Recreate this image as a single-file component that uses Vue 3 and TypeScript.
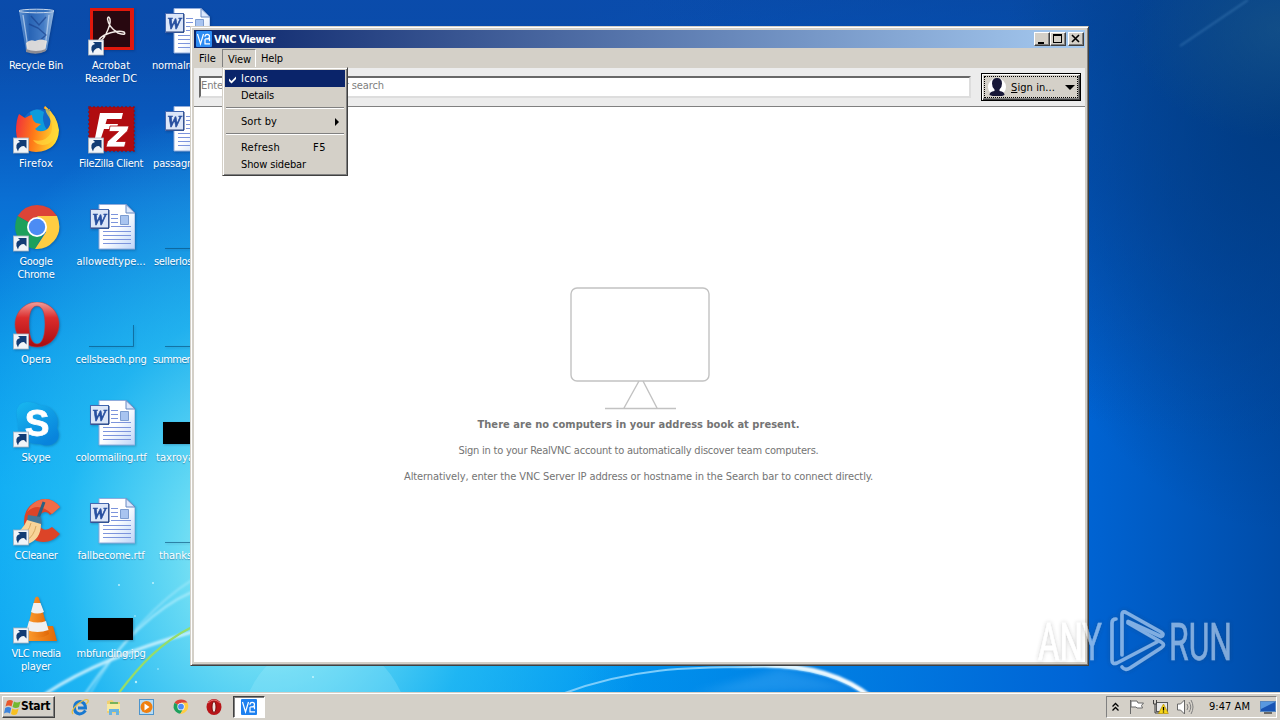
<script setup lang="ts">
type IconKind =
  | 'bin' | 'firefox' | 'chrome' | 'opera' | 'skype' | 'ccleaner' | 'vlc'
  | 'acrobat' | 'filezilla' | 'word' | 'thumb' | 'edge' | 'line'

interface Line { text: string; w: number }
interface DesktopItem { kind: IconKind; lines: Line[]; link?: boolean; indent?: number }

const items: DesktopItem[] = [
  { kind: 'bin', lines: [{ text: 'Recycle Bin', w: 54 }] },
  { kind: 'firefox', link: true, lines: [{ text: 'Firefox', w: 34 }] },
  { kind: 'chrome', link: true, lines: [{ text: 'Google', w: 33 }, { text: 'Chrome', w: 37 }] },
  { kind: 'opera', link: true, lines: [{ text: 'Opera', w: 30 }] },
  { kind: 'skype', link: true, lines: [{ text: 'Skype', w: 29 }] },
  { kind: 'ccleaner', link: true, lines: [{ text: 'CCleaner', w: 43 }] },
  { kind: 'vlc', link: true, lines: [{ text: 'VLC media', w: 49 }, { text: 'player', w: 30 }] },
  { kind: 'acrobat', link: true, lines: [{ text: 'Acrobat', w: 38 }, { text: 'Reader DC', w: 52 }] },
  { kind: 'filezilla', link: true, lines: [{ text: 'FileZilla Client', w: 64 }] },
  { kind: 'word', lines: [{ text: 'allowedtype...', w: 69 }] },
  { kind: 'edge', lines: [{ text: 'cellsbeach.png', w: 71 }] },
  { kind: 'word', lines: [{ text: 'colormailing.rtf', w: 71 }] },
  { kind: 'word', lines: [{ text: 'fallbecome.rtf', w: 67 }] },
  { kind: 'thumb', lines: [{ text: 'mbfunding.jpg', w: 69 }] },
  { kind: 'word', indent: 3, lines: [{ text: 'normalre', w: 43 }] },
  { kind: 'word', indent: 4, lines: [{ text: 'passagr', w: 38 }] },
  { kind: 'line', indent: 5, lines: [{ text: 'sellerlos', w: 38 }] },
  { kind: 'line', indent: 4, lines: [{ text: 'summer', w: 37 }] },
  { kind: 'thumb', indent: 7, lines: [{ text: 'taxroya', w: 38 }] },
  { kind: 'line', indent: 10, lines: [{ text: 'thanks', w: 33 }] },
]

// Spreads or tightens the letters so that a label takes a set width in pixels.
const vFit = {
  mounted(el: HTMLElement, binding: { value: number }) {
    const range = document.createRange()
    range.selectNodeContents(el)
    const natural = range.getBoundingClientRect().width
    const count = (el.textContent ?? '').length
    if (count > 0) el.style.letterSpacing = `${((binding.value - natural) / count).toFixed(3)}px`
  },
}
</script>

<template>
  <div class="desktop">
    <svg class="wallpaper" width="1280" height="720" viewBox="0 0 1280 720">
      <defs>
        <filter id="soft"><feGaussianBlur stdDeviation="1.2" /></filter>
        <filter id="soft3"><feGaussianBlur stdDeviation="4" /></filter>
        <linearGradient id="arc" x1="730" x2="880" y1="0" y2="0" gradientUnits="userSpaceOnUse">
          <stop offset="0" stop-color="#b8e6ff" stop-opacity="0" /><stop offset=".3" stop-color="#e8f8ff" /><stop offset="1" stop-color="#fff" />
        </linearGradient>
      </defs>
      <g fill="none" filter="url(#soft)">
        <path d="M45 694C85 668 130 650 192 632" stroke="#d8f6ff" stroke-width="3" opacity=".85" />
        <path d="M85 694C115 650 150 610 192 592" stroke="#c8f4ff" stroke-width="2" opacity=".65" />
        <path d="M90 694C120 640 160 600 192 580" stroke="#c8f4ff" stroke-width="1.5" opacity=".5" />
      </g>
      <path d="M118 694C140 665 160 643 192 627" fill="none" stroke="#96dc6a" stroke-width="2.2" />
      <ellipse cx="325" cy="735" rx="85" ry="95" fill="#b0f0ff" opacity=".22" />
      <path d="M690 694Q740 682 780 668L860 690Z" fill="#7cc8ff" opacity=".22" filter="url(#soft3)" />
      <path d="M562 694C630 668 690 667 752 667C800 664 850 678 872 700" fill="none" stroke="#7ccdfb" stroke-width="2" />
      <path d="M730 667C790 661 838 670 872 698" fill="none" stroke="url(#arc)" stroke-width="4.500" filter="url(#soft)" />
      <path d="M1180 46L1248 0" stroke="#5c9ad0" stroke-width="2" opacity=".35" filter="url(#soft)" />
      <g fill="#d8faff" opacity=".8"><circle cx="119" cy="585" r="1" /><circle cx="153" cy="583" r="1" /><circle cx="136" cy="682" r="1.2" /><circle cx="158" cy="669" r=".8" /><circle cx="313" cy="677" r="1" /><circle cx="135" cy="616" r=".8" /></g>
    </svg>

    <div class="icons">
      <div v-for="(it, i) in items" :key="i" class="item">
        <svg class="pic" width="48" height="50" viewBox="0 0 48 50">
          <template v-if="it.kind === 'bin'">
            <defs><linearGradient id="bn" x2="1"><stop stop-color="#6b9cd8" /><stop offset=".3" stop-color="#2c68b8" /><stop offset=".7" stop-color="#4c84cc" /><stop offset="1" stop-color="#a8c8e8" /></linearGradient></defs>
            <path d="M7 3L14 43Q24 48 35 42L42 3Z" fill="url(#bn)" opacity=".9" />
            <path d="M11 7l5 33M37 7l-4 33" stroke="#c8dcf4" stroke-width="1.3" opacity=".7" />
            <path d="M19 8l8 9 7-8M17 16l9 4 8 7-9 8" stroke="#153c88" fill="none" stroke-width="1.4" opacity=".6" />
            <path d="M14 35q4-4 9-2 6-3 12 0l-2 10q-10 4-18 0z" fill="#ece4dc" opacity=".9" />
            <path d="M14 41q10 4 20 0v2q-9 5-20 1z" fill="#8c8c94" />
            <ellipse cx="24.500" cy="3" rx="17.500" ry="1.800" fill="#3470bc" stroke="#c8d8ec" stroke-width="1" />
          </template>
          <template v-else-if="it.kind === 'firefox'">
            <defs><linearGradient id="ff" x1="0" y1=".3" x2="1" y2=".5"><stop stop-color="#f0303c" /><stop offset=".45" stop-color="#ff7a18" /><stop offset="1" stop-color="#ffe030" /></linearGradient></defs>
            <circle cx="27" cy="20" r="17" fill="#1268c8" />
            <path d="M18 6q7-5 14 0-3 9 3 18l-13 4z" fill="#0c9cdc" />
            <path d="M7 8l6 4q5-3 7-3 0 5 4 8l5 1-6 5q4 4 11 1 6-4 4-13-1-6 0-8Q29 4 33 0q12 9 14 24-1 21-23 22Q5 45 4 25q0-11 3-17z" fill="url(#ff)" />
            <path d="M33 0q0 6 4 11 5 8 2 16-6 10-18 7 5 7 15 4 10-5 10-16Q45 10 33 0z" fill="#ffd83c" opacity=".7" />
          </template>
          <template v-else-if="it.kind === 'chrome'">
            <path d="M25 23L5.500 12Q13 1 25 1q13 0 20 11H25z" fill="#dc4437" />
            <path d="M25 23L5.500 12Q-1 27 10 39q6 5 13 6l9-16z" fill="#1da05c" />
            <path d="M25 12h20q6 14-3 25-8 9-19 8l11-17z" fill="#ffcd42" />
            <circle cx="25" cy="23" r="10" fill="#fff" /><circle cx="25" cy="23" r="8.200" fill="#4c8cf4" />
          </template>
          <template v-else-if="it.kind === 'opera'">
            <defs><linearGradient id="op" x2="0" y2="1"><stop stop-color="#f0a09c" /><stop offset=".35" stop-color="#dc2c2c" /><stop offset="1" stop-color="#a80c10" /></linearGradient></defs>
            <path fill-rule="evenodd" d="M25 0a22 22.500 0 1 0 .1 0zM25 4c6 0 8 8 8 18s-2 20-8 20-8-10-8-20 2-18 8-18z" fill="url(#op)" stroke="#c43838" stroke-width=".5" />
          </template>
          <template v-else-if="it.kind === 'skype'">
            <defs><linearGradient id="sk" x2=".6" y2="1"><stop stop-color="#18b8f0" /><stop offset="1" stop-color="#0884dc" /></linearGradient></defs>
            <path d="M15 2q7 0 12 3 12 0 17 10 3 5 1 13 4 8-1 14-7 6-16 2-12 1-19-9-4-6-3-13Q1 3 15 2z" fill="url(#sk)" />
            <text x="25" y="36" text-anchor="middle" font-family="Liberation Sans, sans-serif" font-weight="700" font-size="37" fill="#fff" stroke="#fff" stroke-width=".8">S</text>
          </template>
          <template v-else-if="it.kind === 'ccleaner'">
            <path d="M48 9Q38-3 25 3 12 9 12 24 13 39 25 43q13 4 23-7l-8-7q-8 6-12-1-4-8 2-13 5-3 8 2z" fill="#dc4428" />
            <path d="M48 9Q38-3 25 3q-7 4-10 11Q26 3 40 16z" fill="#f06c48" />
            <path d="M32 4L25 23" stroke="#2c6080" stroke-width="3" />
            <path d="M16 17l13 2 1 8-15-4z" fill="#447898" />
            <path d="M15 22l14 4Q29 41 16 46 4 47 1 37 11 32 15 22z" fill="#f8d498" /><path d="M8 40q9-6 11-15m-5 18q8-5 10-15" stroke="#d8a860" fill="none" />
          </template>
          <template v-else-if="it.kind === 'vlc'">
            <defs><linearGradient id="vl" x2="1"><stop stop-color="#ffa030" /><stop offset="1" stop-color="#e06808" /></linearGradient></defs>
            <path d="M14 34l6-4h21l4 15H12z" fill="url(#vl)" />
            <path d="M23 2q2-3 4 0l10 36q-10 7-23 0z" fill="url(#vl)" />
            <path d="M21.500 7h7l3.500 9q-7 3-13 0zM17 25q9 3 17 0l2.500 9q-11 4-22 0z" fill="#f0f0f0" />
          </template>
          <template v-else-if="it.kind === 'acrobat'">
            <path d="M3 0h44v42H3z" fill="#e0180c" /><path d="M6 3h37v36H6z" fill="#280810" />
            <path d="M12 32q3 2 7-6 5-10 4-15-2-4-2.500 0 1 8 10.500 14 9 3 6-1-6-2-17 2-7 3-8 6z" fill="none" stroke="#f4ece8" stroke-width="1.500" />
          </template>
          <template v-else-if="it.kind === 'filezilla'">
            <rect x="2" y="1" width="45" height="44" fill="#b00c10" /><rect x="2" y="1" width="45" height="44" fill="none" stroke="#8c1020" stroke-width="1.500" stroke-dasharray="2 2" />
            <path d="M13 7h23l-1.500 6H20l-1.500 5H31l-1.500 5H17l-3 9H8z" fill="#fff" />
            <path d="M23 20h19l-1.500 5-11 10.500H39L37.500 41H19l1.500-5.500L31.500 25.500H22z" fill="#fff" stroke="#b00c10" stroke-width=".8" />
          </template>
          <template v-else-if="it.kind === 'word'">
            <defs><linearGradient id="pg" x2="1" y2="1"><stop offset=".5" stop-color="#fff" /><stop offset="1" stop-color="#bcd4f8" /></linearGradient></defs>
            <path d="M12 .5h27l9 8.500v36H12z" fill="url(#pg)" stroke="#90acdc" />
            <path d="M39 .5v8.500h9z" fill="#dce8fc" stroke="#6888c0" />
            <path d="M24 10.500h7M24 14.500h7M24 18.500h7M24 22.500h20M16 27.500h28M16 31.500h28M16 35.500h28M16 39.500h28" stroke="#7c94dc" />
            <path d="M33.500 11.500h8v9h-8z" fill="#a8c4f0" stroke="#7c9cd0" />
            <rect x="3.500" y="5.500" width="18" height="19" fill="#dce6f8" stroke="#4468b0" /><path d="M4 24h18V6" stroke="#24407c" fill="none" />
            <text x="12" y="21" text-anchor="middle" font-family="Liberation Serif, serif" font-style="italic" font-weight="700" font-size="16" fill="#2850a0" stroke="#2850a0" stroke-width=".6">W</text>
          </template>
          <path v-else-if="it.kind === 'thumb'" d="M1 22h45v22H1z" fill="#000" />
          <path v-else-if="it.kind === 'edge'" d="M2 44.500h44.500V23" fill="none" stroke="#084c78" stroke-opacity=".6" />
          <path v-else d="M3 44.500h44" stroke="#084c78" stroke-opacity=".6" />
          <g v-if="it.link">
            <rect x="1.500" y="32" width="15" height="15" fill="#f0f4f8" stroke="#a8b4c0" stroke-width=".8" />
            <path d="M6 45.500Q1.500 38 8 36L6 34h8.500v8.500L12 40Q7 40 6 45.500z" fill="#123c74" />
          </g>
        </svg>
        <div class="caption" :class="{ cut: it.indent !== undefined }" :style="{ paddingLeft: (it.indent ?? 0) + 'px' }">
          <div v-for="l in it.lines" :key="l.text"><span v-fit="l.w">{{ l.text }}</span></div>
        </div>
      </div>
    </div>

    <section class="window">
      <header class="titlebar">
        <svg width="16" height="16" viewBox="0 0 16 16"><rect width="16" height="16" rx="1" fill="#2c8cf4" /><path d="M1.500 3l3 10 3-10M9 5.800Q9 3.300 11.200 3.300q2.300 0 2.300 2.200 0 2.200-2.300 2.400M9.200 7.900h4.300v2.300M9 8v4.800h5" fill="none" stroke="#fff" stroke-width="1.200" /></svg>
        <b v-fit="61">VNC Viewer</b>
        <div class="controls">
          <button><svg width="14" height="12"><path d="M3 9h6v2H3z" /></svg></button>
          <button><svg width="14" height="12"><path fill-rule="evenodd" d="M2 1h9v9H2zM3 3h7v6H3z" /></svg></button>
          <button class="close"><svg width="14" height="12"><path d="M3 2l7 7M10 2L3 9" stroke="#000" stroke-width="1.600" /></svg></button>
        </div>
      </header>
      <nav class="menubar">
        <span class="mi"><span v-fit="17">File</span></span>
        <span class="mi open"><span v-fit="23">View</span></span>
        <span class="mi"><span v-fit="22">Help</span></span>
      </nav>
      <div class="toolbar">
        <div class="search"><span v-fit="183">Enter a VNC Server address or search</span></div>
        <button class="signin">
          <svg width="18" height="18" viewBox="0 0 18 18"><circle cx="9" cy="9" r="9" fill="#fff" /><path d="M9 0q5 0 5 5.500 0 4-2.500 6v1.500q5 .5 5 4-4 2-7.500 1.500-4 0-7.500-1.500 0-3.500 5-4v-1.500Q4 9.500 4 5.500 4 0 9 0z" fill="#181838" /></svg>
          <span v-fit="44" class="si"><u>S</u>ign in...</span>
          <svg width="10" height="5"><path d="M0 0h10L5 5z" /></svg>
        </button>
      </div>
      <main class="content">
        <svg width="140" height="124" viewBox="0 0 140 124" fill="none" stroke="#c2c2c2" stroke-width="1.400"><rect x="1" y="1" width="138" height="93" rx="6" /><path d="M69 94L54 121M73 94L87 121M35 121.500H106" /></svg>
        <b v-fit="322">There are no computers in your address book at present.</b>
        <p><span v-fit="360">Sign in to your RealVNC account to automatically discover team computers.</span></p>
        <p><span v-fit="469">Alternatively, enter the VNC Server IP address or hostname in the Search bar to connect directly.</span></p>
      </main>
    </section>

    <div class="popup">
      <div class="row on"><svg class="tick" width="9" height="9"><path d="M1 3.500L3.500 6 8 1.500V4L3.500 8.500 1 6z" fill="#fff" /></svg><span v-fit="27">Icons</span></div>
      <div class="row"><span v-fit="33">Details</span></div>
      <hr />
      <div class="row"><span v-fit="36">Sort by</span><svg class="sub" width="4" height="8"><path d="M0 0v8l4-4z" /></svg></div>
      <hr />
      <div class="row"><span class="name"><span v-fit="39">Refresh</span></span><span v-fit="13">F5</span></div>
      <div class="row"><span v-fit="65">Show sidebar</span></div>
    </div>

    <svg class="watermark" width="210" height="70" viewBox="1031 606 210 70">
      <defs><filter id="sh" x="-10%" y="-10%" width="120%" height="120%"><feDropShadow dx="0" dy="0" stdDeviation="2" flood-color="#303030" flood-opacity=".5" /></filter></defs>
      <g filter="url(#sh)" opacity=".5">
        <g fill="#fff" stroke="#fff" stroke-width=".5" font-family="Roboto, sans-serif" font-size="52">
          <text x="1038" y="660" textLength="64" lengthAdjust="spacingAndGlyphs">ANY</text>
          <text x="1169" y="660" textLength="63" lengthAdjust="spacingAndGlyphs">RUN</text>
        </g>
        <g fill="none" stroke="#fff" stroke-width="3.600" stroke-linecap="round" stroke-linejoin="round">
          <path d="M1116 619q-4 0-4 4v37q0 5 5 3l40-21" />
          <path d="M1122 655v-40q0-5 5-2l34 19q4 3 0 4.500l-33-15" />
          <path d="M1122 667q3 4 8 1l31-20q5-3 0-6l-33-19" />
        </g>
      </g>
    </svg>

    <footer class="taskbar">
      <button class="start">
        <svg width="17" height="16" viewBox="0 0 17 16"><path d="M3 2q3-2 6 0L7.500 7.500q-3-2-6 0z" fill="#e8582c" /><path d="M10 2.500q3 2 6.500 0L15 8q-3 2-6.500 0z" fill="#74b830" /><path d="M1.200 9q3-2 6 0L6 14.500q-3-2-6 0z" fill="#3c84dc" /><path d="M8.200 9.500q3 2 6.500 0L13 15q-3 2-6 0z" fill="#f8c020" /></svg>
        <b v-fit="29">Start</b>
      </button>
      <div class="quick">
        <svg width="18" height="18" viewBox="0 0 18 18"><path d="M14.500 12.500Q12 16 8.500 16 3 15 3.500 9 4 4 9 3.500q5.500 1 5.500 6.500H7" fill="none" stroke="#1878d0" stroke-width="3" /><path d="M2 16Q-1 13 7 6q8-6 10-4 1 2-2 4" fill="none" stroke="#e8c040" stroke-width="1.300" /></svg>
        <svg width="18" height="18" viewBox="0 0 18 18"><path d="M2 3l5-1 2 2h6v11H2z" fill="#f0d070" /><path d="M2 6h13v7H2z" fill="#f8eaa0" /><path d="M4 17v-6h10v6h-3v-3H7v3z" fill="#68b4e0" /><path d="M5 5h8" stroke="#50a850" stroke-width="1.500" /></svg>
        <svg width="18" height="18" viewBox="0 0 18 18"><rect x="1.500" y="1.500" width="14" height="15" fill="#b8dcf4" stroke="#4c94cc" /><circle cx="8.500" cy="9" r="6" fill="#f08010" /><path d="M6.500 5.500v7l5-3.500z" fill="#fff" /></svg>
        <svg width="18" height="18" viewBox="0 0 50 48"><path d="M25 23L7 12Q13 3 25 3q13 0 18 9H25z" fill="#dc4437" /><path d="M25 23L7 12Q0 26 11 37q6 5 12 6l9-14z" fill="#1da05c" /><path d="M25 12h18q6 14-3 23-8 9-17 8l11-17z" fill="#ffcd42" /><circle cx="25" cy="23" r="10" fill="#fff" /><circle cx="25" cy="23" r="8" fill="#4c8cf4" /></svg>
        <svg width="18" height="18" viewBox="0 0 18 18"><ellipse cx="9" cy="9" rx="7.500" ry="8" fill="#b81418" /><path d="M3 5q6-6 12 0" stroke="#e87070" fill="none" /><ellipse cx="9" cy="9" rx="2" ry="5.500" fill="#f0e4e0" stroke="#780808" /></svg>
      </div>
      <div class="task"><svg width="16" height="16" viewBox="0 0 16 16"><rect width="16" height="16" rx="1" fill="#1c80f0" /><path d="M1.500 3l3 10 3-10M9 5.800Q9 3.300 11.200 3.300q2.300 0 2.300 2.200 0 2.200-2.300 2.400M9.200 7.900h4.300v2.300M9 8v4.800h5" fill="none" stroke="#fff" stroke-width="1.200" /></svg></div>
      <div class="tray">
        <svg width="9" height="10" fill="none" stroke="#000" stroke-width="1.300"><path d="M1.500 4.500l3-3 3 3M1.500 8.500l3-3 3 3" /></svg>
        <svg class="flag" width="17" height="16" viewBox="0 0 17 16"><path d="M2.500 1v14M3 2h6l1 2h5.500l-2 2.500 1 2.500H9L8 8H3z" fill="#fff" stroke="#686868" /></svg>
        <svg class="net" width="17" height="16" viewBox="0 0 17 16"><rect x="4.500" y="3.500" width="11" height="9" fill="#e8e8e8" stroke="#585858" /><path d="M1.500 1v4h3V1M3 5v9h5" fill="none" stroke="#404040" /><path d="M11.500 5l4.800 9.500H6.500z" fill="#f8d818" stroke="#b89000" stroke-width=".7" /><path d="M11.500 8v3.500m0 1v1" stroke="#000" stroke-width="1.300" /></svg>
        <svg class="vol" width="18" height="16" viewBox="0 0 18 16"><path d="M1.500 5h3l4-4v14l-4-4h-3z" fill="#fff" stroke="#686868" /><path d="M11 5q2 3 0 6M13 3q3.500 5 0 10M15 1q4 7 0 14" fill="none" stroke="#808080" /></svg>
        <span class="clock"><span v-fit="41">9:47 AM</span></span>
        <svg width="16" height="14" viewBox="0 0 16 14"><rect x=".5" y="1.500" width="15" height="10" fill="#1854b4" stroke="#5888c0" /><path d="M1 2h14L1 9z" fill="#5898e0" /><path d="M4 13h8" stroke="#484848" stroke-width="1.500" /></svg>
      </div>
    </footer>
  </div>
</template>

<style>
html, body { margin: 0; overflow: hidden; }
</style>

<style scoped>
.desktop {
  position: relative; width: 1280px; height: 720px; overflow: hidden;
  display: flex; flex-direction: column; justify-content: space-between;
  font: 11px/13px "DejaVu Sans Condensed", "DejaVu Sans", sans-serif; color: #000;
  background:
    radial-gradient(ellipse 150px 110px at 1280px 30px, rgba(28, 88, 136, .6), rgba(28, 88, 136, 0)),
    radial-gradient(ellipse 280px 420px at 1280px 110px, rgba(0, 58, 128, .95), rgba(0, 60, 130, 0)),
    radial-gradient(ellipse 640px 440px at 1280px 0, rgba(6, 72, 156, .95), rgba(6, 72, 162, .6) 50%, rgba(6, 80, 180, 0)),
    linear-gradient(rgba(10, 76, 172, .9), rgba(10, 76, 168, 0) 12%),
    linear-gradient(to right, rgba(0, 96, 210, 0) 45%, rgba(0, 98, 212, .95) 84%, #004ca8 100%),
    radial-gradient(ellipse 380px 460px at 270px 560px, rgba(176, 246, 242, 1), rgba(120, 228, 244, .85) 25%, rgba(50, 200, 244, .62) 55%, rgba(0, 160, 240, 0)),
    linear-gradient(#0a48a4 0, #0958bc 16%, #0a70d4 28%, #0490e8 50%, #00a0f4 68%, #0096f0 100%);
}
.wallpaper { position: absolute; left: 0; top: 0; }
.icons {
  position: relative; display: grid; grid-auto-flow: column;
  grid-template-rows: repeat(7, 98px); grid-template-columns: 74px 74px 74px; column-gap: 1px;
  margin: 0 0 0 -1px; height: 686px;
}
.item { display: flex; flex-direction: column; align-items: center; padding-top: 8px; min-width: 0; }
.pic { display: block; flex: none; filter: drop-shadow(1px 1px 1px rgba(0, 20, 60, .25)); }
.caption { color: #fff; text-align: center; white-space: nowrap; text-shadow: 0 1px 1px rgba(0, 40, 90, .4); margin-top: 1px; }
.caption.cut { align-self: flex-start; }
button { font: inherit; margin: 0; }
svg { display: block; flex: none; }

.window {
  position: absolute; left: 190px; top: 26px; width: 899px; height: 640px; box-sizing: border-box;
  display: flex; flex-direction: column; background: #d4d0c8; padding: 2px;
  border: 1px solid; border-color: #d4d0c8 #404040 #404040 #d4d0c8;
  box-shadow: inset 1px 1px #fff, inset -1px -1px #808080;
}
.titlebar {
  display: flex; align-items: center; height: 18px; margin: 1px 1px 0; padding: 0 1px 0 2px;
  color: #fff; background: linear-gradient(to right, #0a246a, #a6caf0);
}
.titlebar b { margin-left: 2px; }
.controls { display: flex; margin-left: auto; }
.controls button {
  width: 16px; height: 14px; padding: 0; overflow: hidden; background: #d4d0c8;
  border: 1px solid; border-color: #fff #404040 #404040 #fff; box-shadow: inset -1px -1px #808080;
}
.controls .close { margin-left: 2px; }
.menubar { display: flex; height: 20px; margin: 0 1px; }
.mi { display: flex; align-items: center; height: 17px; padding: 0 5px 0 4px; margin-top: 1px; border: 1px solid transparent; }
.mi.open { border-color: #808080 #fff #fff #808080; padding: 1px 4px 0 5px; height: 16px; }
.toolbar {
  display: flex; align-items: center; height: 38px; margin: 0 1px; padding: 0 4px 0 5px;
  background: #ececec; border-bottom: 1px solid #808080;
}
.search {
  flex: 1; height: 18px; padding: 0; margin: 0 10px 1px 0; white-space: nowrap; line-height: 16px; color: #808080; background: #fff;
  border: 2px solid; border-color: #686868 #ddd #ddd #686868;
}
.signin {
  display: flex; align-items: center; width: 100px; height: 28px; padding: 0 5px 0 6px; background: #d4d0c8;
  border: 1px solid #000; box-shadow: inset 1px 1px #fff, inset -1px -1px #404040, inset -2px -2px #808080;
  outline: 1px dotted #000; outline-offset: -4px;
}
.si { margin: 0 auto 0 5px; white-space: nowrap; }
.content {
  flex: 1; margin: 0 1px 1px; padding-top: 180px; background: #fff; color: #747474;
  display: flex; flex-direction: column; align-items: center; white-space: nowrap;
}
.content b { margin: 7px 2px 0 0; }
.content p { margin: 13px 2px 0 0; }

.popup {
  position: absolute; left: 222px; top: 67px; width: 126px; height: 109px; box-sizing: border-box; padding: 2px 1px;
  background: #d4d0c8; border: 1px solid; border-color: #d4d0c8 #404040 #404040 #d4d0c8;
  box-shadow: inset 1px 1px #fff, inset -1px -1px #808080;
}
.row { position: relative; display: flex; align-items: center; height: 17px; padding-left: 17px; margin: 0 1px 0 0; white-space: nowrap; }
.row.on { background: #0a246a; color: #fff; margin-left: 1px; padding-left: 16px; }
.tick { position: absolute; left: 3px; top: 5px; }
.sub { margin: 0 6px 0 auto; }
.name { width: 72px; }
hr { height: 1px; margin: 3px 2px 4px; border: 0; border-top: 1px solid #808080; background: #fff; }
.watermark { position: absolute; left: 1031px; top: 606px; }

.taskbar {
  position: relative; display: flex; align-items: center; height: 25px; padding: 0 2px 1px;
  background: #d4d0c8; border-top: 1px solid #fff; box-shadow: 0 -1px #d4d0c8;
}
.start {
  display: flex; align-items: center; width: 53px; height: 22px; padding: 0 1px; background: #d4d0c8;
  border: 1px solid; border-color: #fff #404040 #404040 #fff; box-shadow: inset -1px -1px #808080;
}
.start b { font-size: 12px; }
.quick { display: flex; gap: 15.5px; margin-left: 16px; }
.task {
  display: flex; align-items: center; justify-content: center; width: 30px; height: 20px; margin-left: 10px; background: #fff;
  border: 1px solid; border-color: #404040 #fff #fff #404040; box-shadow: inset 1px 1px #808080;
}
.tray {
  display: flex; align-items: center; margin-left: auto; width: 165px; height: 20px; padding: 0 0 0 4px; margin-right: 1px;
  border: 1px solid; border-color: #808080 #fff #fff #808080;
}
.flag { margin-left: 8px; }
.net { margin-left: 7px; }
.vol { margin-left: 7px; }
.clock { margin: 0 auto 0 15px; white-space: nowrap; }
</style>
